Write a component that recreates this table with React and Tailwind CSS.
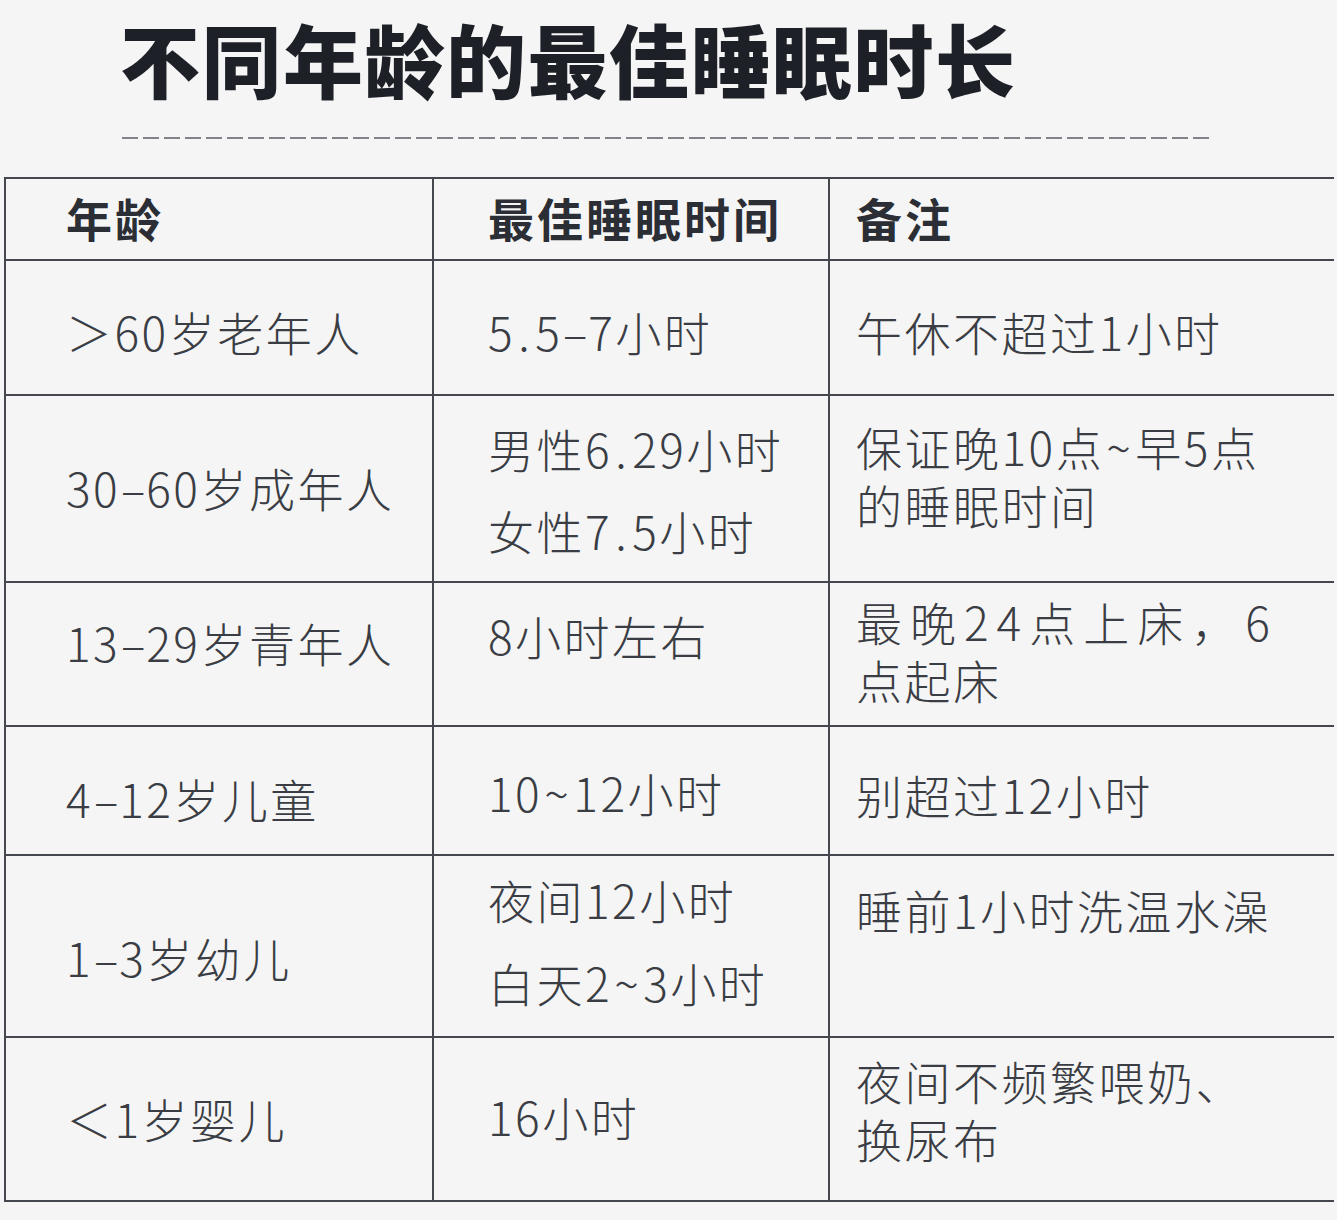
const font = { fontFamily: '"Noto Sans CJK SC", "Noto Sans", sans-serif' }

const rows = [
    {
        h: 'h-[135px]',
        cells: [
            { lines: ['＞60岁老年人'], pt: 'pt-[41px]' },
            { lines: ['5.5-7小时'], pt: 'pt-[41px]' },
            { lines: ['午休不超过1小时'], pt: 'pt-[41px]' },
        ],
    },
    {
        h: 'h-[187px]',
        cells: [
            { lines: ['30-60岁成年人'], pt: 'pt-[62px]' },
            { lines: ['男性6.29小时', '女性7.5小时'], pt: 'pt-[23px]', gap: 'gap-[24px]' },
            { lines: ['保证晚10点~早5点', '的睡眠时间'], pt: 'pt-[21px]' },
        ],
    },
    {
        h: 'h-[144px]',
        cells: [
            { lines: ['13-29岁青年人'], pt: 'pt-[30px]' },
            { lines: ['8小时左右'], pt: 'pt-[23px]' },
            { lines: ['最晚24点上床，6', '点起床'], pt: 'pt-[9px]', justify: true },
        ],
    },
    {
        h: 'h-[129px]',
        cells: [
            { lines: ['4-12岁儿童'], pt: 'pt-[42px]' },
            { lines: ['10~12小时'], pt: 'pt-[36px]' },
            { lines: ['别超过12小时'], pt: 'pt-[38px]' },
        ],
    },
    {
        h: 'h-[182px]',
        cells: [
            { lines: ['1-3岁幼儿'], pt: 'pt-[72px]' },
            { lines: ['夜间12小时', '白天2~3小时'], pt: 'pt-[14px]', gap: 'gap-[25px]' },
            { lines: ['睡前1小时洗温水澡'], pt: 'pt-[24px]' },
        ],
    },
    {
        h: 'h-[164px]',
        cells: [
            { lines: ['＜1岁婴儿'], pt: 'pt-[51px]' },
            { lines: ['16小时'], pt: 'pt-[49px]' },
            { lines: ['夜间不频繁喂奶、', '换尿布'], pt: 'pt-[13px]' },
        ],
    },
]

const padX = ['pl-[60px]', 'pl-[54px]', 'pl-[26px]']

// the source image uses a wider dash and dot than Noto, pad them out
function Line({ text }) {
    return text.split(/([-.~])/).map((part, i) => {
        if (part === '-')
            return (
                <span key={i} className="inline-block w-[26px] text-center tracking-normal">
                    –
                </span>
            )
        if (part === '.') return <span key={i} className="mx-[3px]">.</span>
        if (part === '~') return <span key={i} className="mx-[2px]">~</span>
        return part
    })
}

function App() {
    return (
        <div className="w-[1337px] h-[1220px] bg-[#f5f5f6] overflow-hidden" style={font}>
            <h1 className="pl-[120px] pt-[15px] text-[80px] leading-[84px] font-black text-[#1d2026] tracking-[1.5px]">
                不同年龄的最佳睡眠时长
            </h1>
            <div className="ml-[122px] mt-[38px] w-[1091px] h-[2px] bg-[repeating-linear-gradient(90deg,#808389_0_16px,transparent_16px_21px)]" />
            <div className="ml-[4px] mt-[38px] w-[1330px] border-t-2 border-l-2 border-[#44474d] grid grid-cols-[428px_396px_1fr]">
                {['年龄', '最佳睡眠时间', '备注'].map((t, i) => (
                    <div
                        key={t}
                        className={`h-[82px] ${padX[i]} pt-[9px] border-b-2 border-[#44474d] ${
                            i < 2 ? 'border-r-2' : ''
                        }`}
                    >
                        <div className="text-[46px] leading-[58px] font-bold text-[#2b2e34] tracking-[3px]">
                            {t}
                        </div>
                    </div>
                ))}
                {rows.map((r, ri) =>
                    r.cells.map((c, ci) => (
                        <div
                            key={`${ri}-${ci}`}
                            className={`${r.h} ${padX[ci]} ${c.pt} border-b-2 border-[#44474d] ${
                                ci < 2 ? 'border-r-2' : ''
                            } flex flex-col ${c.gap || ''}`}
                        >
                            {c.lines.map((l, li) => (
                                <div
                                    key={l}
                                    className={`text-[46px] leading-[58px] font-light text-[#3a3d43] whitespace-nowrap ${
                                        c.justify && li === 0 ? 'tracking-[8px]' : 'tracking-[2.5px]'
                                    }`}
                                >
                                    <Line text={l} />
                                </div>
                            ))}
                        </div>
                    ))
                )}
            </div>
        </div>
    )
}

export default App
